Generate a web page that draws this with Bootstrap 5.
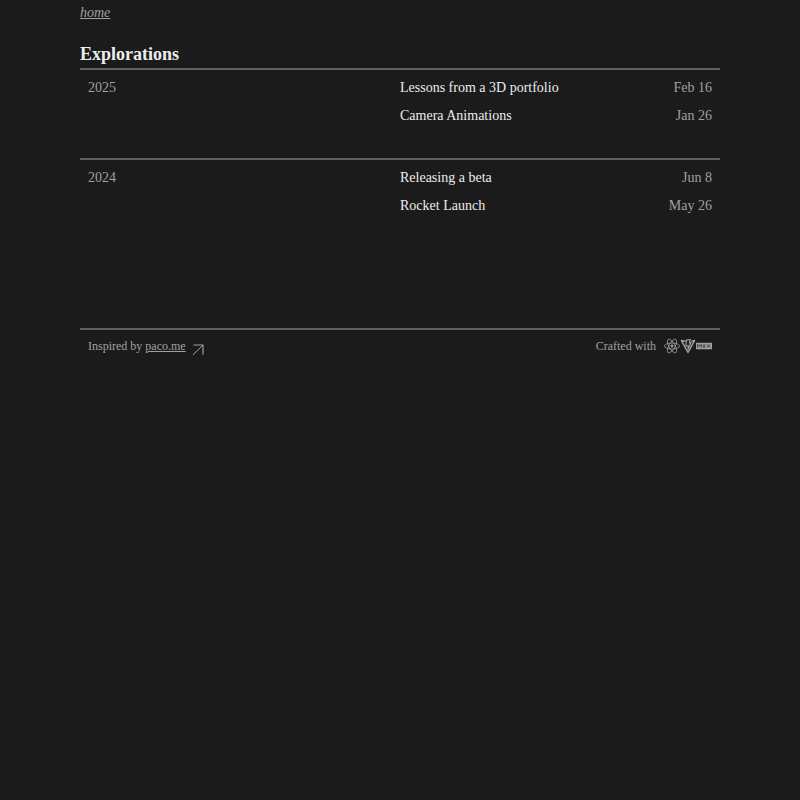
<!DOCTYPE html>
<html lang="en">
<head>
<meta charset="utf-8">
<meta name="viewport" content="width=device-width, initial-scale=1">
<title>Explorations</title>
<link href="https://cdn.jsdelivr.net/npm/bootstrap@5.3.0/dist/css/bootstrap.min.css" rel="stylesheet">
<style>
body{background:#1b1b1b;color:#ededed;font-family:"Liberation Serif",serif;font-size:14px;line-height:28px}
.page{width:640px}
a{color:inherit}
.dim,.dim a{color:#a0a0a0}
.home{line-height:26px}
.title{font-size:18px;line-height:28px;font-weight:700;margin-top:14px}
.rule{border-top:2px solid #606060}
.year{height:90px;padding-top:4px}
.year.final{height:170px}
.foot{font-size:12px;line-height:16px;padding-top:8px}
svg{display:block}
.arrow{margin:6px 0 0 6px}
</style>
</head>
<body>
<div class="page mx-auto">
  <nav class="home dim"><a href="#" class="fst-italic">home</a></nav>
  <main>
    <h1 class="title mb-0">Explorations</h1>
    <section class="year rule d-flex">
      <div class="w-50 ps-2 dim">2025</div>
      <div class="w-50 pe-2">
        <div class="d-flex justify-content-between"><a href="#" class="text-decoration-none">Lessons from a 3D portfolio</a><span class="dim">Feb 16</span></div>
        <div class="d-flex justify-content-between"><a href="#" class="text-decoration-none">Camera Animations</a><span class="dim">Jan 26</span></div>
      </div>
    </section>
    <section class="year final rule d-flex">
      <div class="w-50 ps-2 dim">2024</div>
      <div class="w-50 pe-2">
        <div class="d-flex justify-content-between"><a href="#" class="text-decoration-none">Releasing a beta</a><span class="dim">Jun 8</span></div>
        <div class="d-flex justify-content-between"><a href="#" class="text-decoration-none">Rocket Launch</a><span class="dim">May 26</span></div>
      </div>
    </section>
  </main>
  <footer class="foot rule dim d-flex justify-content-between px-2">
    <div class="d-flex"><span>Inspired by <a href="#">paco.me</a></span>
      <svg class="arrow" width="13" height="12" viewBox="0 0 13 12" fill="none" stroke="#a0a0a0"><path d="M.8 11L11 1" stroke-width="1"/><path d="M1.5 1H11V10.5" stroke-width="1.2"/></svg>
    </div>
    <div class="d-flex"><span class="pe-2">Crafted with</span>
      <svg width="16" height="16" viewBox="0 0 24 24" fill="none" stroke="#a0a0a0" stroke-width="1.2"><circle cx="12" cy="12" r="2.2" fill="#a0a0a0" stroke="none"/><ellipse cx="12" cy="12" rx="11.4" ry="4.5"/><ellipse cx="12" cy="12" rx="11.4" ry="4.5" transform="rotate(60 12 12)"/><ellipse cx="12" cy="12" rx="11.4" ry="4.5" transform="rotate(120 12 12)"/></svg>
      <svg width="16" height="16" viewBox="0 0 24 24" fill="none" stroke="#a0a0a0" stroke-width="2.2" stroke-linejoin="round"><path d="M8.6 4.8L2.2 3.8L12 21.6L21.8 3.8L17 4.8"/><path d="M9.6 3.2L15.2 2.2L14.2 7.2L16.3 7L12.2 16.5L12.4 11.6L9 12Z" stroke-width="1.8"/></svg>
      <svg width="16" height="16" viewBox="0 0 24 24"><path fill="#a0a0a0" d="M.8 7H23.2Q24 7 24 7.8V16.2Q24 17 23.2 17H.8Q0 17 0 16.2V7.8Q0 7 .8 7Z"/><path fill="none" stroke="#1b1b1b" stroke-width="1.2" d="M2.6 14.6V9.6L5.2 12.2L7.8 9.6V14.6M12.1 9V14M9.9 12L12.1 14.2L14.3 12M16.5 9.6L21.2 14.3M21.2 9.6L16.5 14.3"/></svg>
    </div>
  </footer>
</div>
<script src="https://cdn.jsdelivr.net/npm/bootstrap@5.3.0/dist/js/bootstrap.bundle.min.js"></script>
</body>
</html>
